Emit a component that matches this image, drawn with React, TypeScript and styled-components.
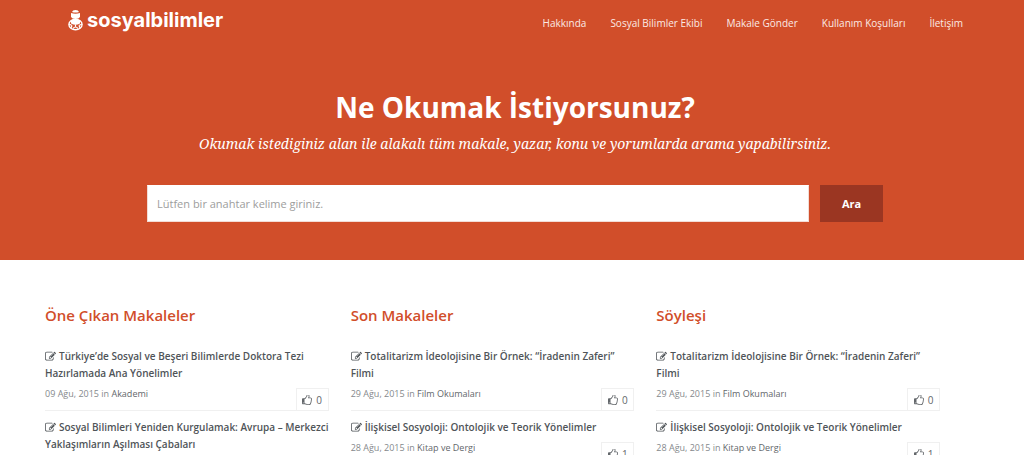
import React from "react";
import styled, { createGlobalStyle } from "styled-components";

const GlobalStyle = createGlobalStyle`
  *, *::before, *::after { box-sizing: border-box; }
  body {
    margin: 0;
    background: #fff;
    color: #4f5458;
    font-family: "Open Sans", "Noto Sans", sans-serif;
    overflow-x: hidden;
  }
  h1, h2, h3, p, ul { margin: 0; padding: 0; }
  ul { list-style: none; }
  a { color: inherit; text-decoration: none; }
`;

const Hero = styled.header`
  background: #d14e2a;
  color: #fff;
  padding-bottom: 38px;
`;

const TopBar = styled.div`
  display: flex;
  align-items: center;
  justify-content: space-between;
  height: 46px;
  padding: 0 61px 0 68px;
`;

const Logo = styled.a`
  display: flex;
  align-items: center;
  gap: 4px;
  padding-bottom: 6px;
  font-family: Inter, "Open Sans", sans-serif;
  font-size: 20px;
  line-height: 24px;
  font-weight: 700;
`;

const LogoMark = styled.svg`
  width: 15px;
  height: 22px;
`;

const Nav = styled.nav`
  display: flex;
  gap: 24px;
  font-size: 10px;
  line-height: 20px;
  color: #fbeae5;
`;

const HeroBody = styled.div`
  padding: 40px 141px 0 147px;
  text-align: center;
`;

const HeroTitle = styled.h1`
  font-size: 28px;
  line-height: 42px;
  font-weight: 700;
`;

const Tagline = styled.p`
  margin-top: 4px;
  font-family: "Noto Serif", "Liberation Serif", serif;
  font-size: 14px;
  line-height: 24px;
  font-style: italic;
`;

const SearchForm = styled.form`
  display: flex;
  gap: 11px;
  margin-top: 29px;
`;

const SearchInput = styled.input`
  flex: 1;
  min-width: 0;
  height: 37px;
  padding: 0 9px;
  border: 1px solid #f3dcd5;
  border-top-color: #fff;
  border-radius: 0;
  background: #fff;
  color: #555;
  font-family: inherit;
  font-size: 11px;
  &::placeholder { color: #9d9d9d; opacity: 1; }
`;

const SearchButton = styled.button`
  width: 63px;
  height: 37px;
  padding: 0;
  border: 0;
  background: #9b3622;
  color: #fff;
  font-family: inherit;
  font-size: 11px;
  font-weight: 700;
`;

const Columns = styled.main`
  display: grid;
  grid-template-columns: repeat(3, minmax(0, 1fr));
  gap: 22px;
  padding: 42px 84px 0 45px;
`;

const ColumnTitle = styled.h2`
  color: #d14e2a;
  font-size: 15px;
  line-height: 26px;
  font-weight: 600;
  margin-bottom: 19px;
`;

const Article = styled.li`
  display: flow-root;
  border-bottom: 1px solid #f0f0f0;
  margin-bottom: 7px;
  &:last-child { border-bottom: 0; }
`;

const ArticleTitle = styled.h3`
  font-size: 10px;
  line-height: 17px;
  padding-top: 1px;
  font-weight: 600;
`;

const MetaRow = styled.div`
  display: flex;
  justify-content: space-between;
  align-items: flex-start;
  padding-top: 4px;
`;

const Meta = styled.p`
  font-size: 9px;
  line-height: 16px;
  color: #85898c;
  a { color: #63676b; }
`;

const LikeButton = styled.button`
  display: flex;
  align-items: center;
  justify-content: center;
  gap: 4px;
  width: 33px;
  height: 23px;
  margin: 2px 0 -1px;
  padding: 0;
  border: 1px solid #f0f0f0;
  background: #fff;
  color: #63676b;
  font-family: inherit;
  font-size: 10px;
`;

const Glyph = styled.svg<{ $size: number; $inline?: boolean }>`
  width: ${(p) => p.$size}px;
  height: ${(p) => p.$size}px;
  fill: currentColor;
  ${(p) => p.$inline && "margin-right: 3px; vertical-align: -2px;"}
`;

const EditIcon = () => (
  <Glyph $size={11} $inline viewBox="0 128 1792 1536" aria-hidden="true">
    <path d="M888 1184l116-116-152-152-116 116v56h96v96h56zm440-720q-16-16-33 1l-350 350q-17 17-1 33t33-1l350-350q17-17 1-33zm80 594v190q0 119-84.5 203.5t-203.5 84.5h-832q-119 0-203.5-84.5t-84.5-203.5v-832q0-119 84.5-203.5t203.5-84.5h832q63 0 117 25 15 7 18 23 3 17-9 29l-49 49q-14 14-32 8-23-6-45-6h-832q-66 0-113 47t-47 113v832q0 66 47 113t113 47h832q66 0 113-47t47-113v-126q0-13 9-22l64-64q15-15 35-7t20 29zm-96-738l288 288-672 672h-288v-288zm444 132l-92 92-288-288 92-92q28-28 68-28t68 28l152 152q28 28 28 68t-28 68z" />
  </Glyph>
);

const ThumbIcon = () => (
  <Glyph $size={10} viewBox="0 128 1536 1536" aria-hidden="true">
    <path d="M256 1344q0-26-19-45t-45-19-45 19-19 45 19 45 45 19 45-19 19-45zm1152-576q0-51-39-89.5t-89-38.5h-352q0-58 48-159.5t48-160.5q0-98-32-145t-128-47q-26 26-38 85t-30.5 125.5-59.5 109.5q-22 23-77 91-4 5-23 30t-31.5 41-34.5 42.5-40 44-38.5 35.5-40 27-35.5 9h-32v640h32q13 0 31.5 3t33 6.5 38 11 35 11.5 35.5 12.5 29 10.5q211 73 342 73h121q192 0 192-167 0-26-5-56 30-16 47.5-52.5t17.5-73.5-18-69q53-50 53-119 0-25-10-55.5t-25-47.5q32-1 53.5-47t21.5-81zm128-1q0 89-49 163 9 33 9 69 0 77-38 144 3 21 3 43 0 101-60 178 1 139-85 219.5t-227 80.5h-129q-96 0-189.5-22.5t-216.5-65.5q-116-40-138-40h-288q-53 0-90.5-37.5t-37.5-90.5v-640q0-53 37.5-90.5t90.5-37.5h274q36-24 137-155 58-75 107-128 24-25 35.5-85.5t30.5-126.5 62-108q39-37 90-37 84 0 151 32.5t102 101.5 35 186q0 93-48 192h176q104 0 180 76t76 179z" />
  </Glyph>
);

type Entry = { title: string; date?: string; category?: string; likes?: number };

const film: Entry = {
  title: "Totalitarizm İdeolojisine Bir Örnek: “İradenin Zaferi” Filmi",
  date: "29 Ağu, 2015",
  category: "Film Okumaları",
  likes: 0,
};
const relational: Entry = {
  title: "İlişkisel Sosyoloji: Ontolojik ve Teorik Yönelimler",
  date: "28 Ağu, 2015",
  category: "Kitap ve Dergi",
  likes: 1,
};

const sections: { heading: string; entries: Entry[] }[] = [
  {
    heading: "Öne Çıkan Makaleler",
    entries: [
      {
        title: "Türkiye’de Sosyal ve Beşeri Bilimlerde Doktora Tezi Hazırlamada Ana Yönelimler",
        date: "09 Ağu, 2015",
        category: "Akademi",
        likes: 0,
      },
      {
        title: "Sosyal Bilimleri Yeniden Kurgulamak: Avrupa – Merkezci Yaklaşımların Aşılması Çabaları",
      },
    ],
  },
  { heading: "Son Makaleler", entries: [film, relational] },
  { heading: "Söyleşi", entries: [film, relational] },
];

const links = ["Hakkında", "Sosyal Bilimler Ekibi", "Makale Gönder", "Kullanım Koşulları", "İletişim"];

export default function App() {
  return (
    <>
      <GlobalStyle />
      <Hero>
        <TopBar>
          <Logo href="#">
            <LogoMark viewBox="0 0 15 22" aria-hidden="true">
              <path d="M4 3Q4.500 1 7.500 1T11 3Q7.500 4 4 3z" fill="#fff" />
              <path d="M3 4q4.500 1.500 9 0v4q-1 2-4.500 2T3 8z" fill="#fff" />
              <ellipse cx="7.500" cy="15.500" rx="6.600" ry="5.300" fill="none" stroke="#fff" strokeWidth="1.400" />
              <path d="M3 11.500q4.500-2 9 0v3q-4.500 2.500-9 0z" fill="#fff" />
              <path d="M1 15l3 1.500M14 15l-3 1.500M4 16.500l-1 2.500M11 16.500l1 2.500M7.500 15.500v2M5 19.500q2.500-3 5 0" fill="none" stroke="#fff" strokeWidth="1.200" />
            </LogoMark>
            sosyalbilimler
          </Logo>
          <Nav>
            {links.map((l) => (
              <a href="#" key={l}>{l}</a>
            ))}
          </Nav>
        </TopBar>
        <HeroBody>
          <HeroTitle>Ne Okumak İstiyorsunuz?</HeroTitle>
          <Tagline>
            Okumak istediginiz alan ile alakalı tüm makale, yazar, konu ve yorumlarda arama yapabilirsiniz.
          </Tagline>
          <SearchForm onSubmit={(e) => e.preventDefault()}>
            <SearchInput type="text" aria-label="Anahtar kelime" placeholder="Lütfen bir anahtar kelime giriniz." />
            <SearchButton type="submit">Ara</SearchButton>
          </SearchForm>
        </HeroBody>
      </Hero>
      <Columns>
        {sections.map((s) => (
          <section key={s.heading}>
            <ColumnTitle>{s.heading}</ColumnTitle>
            <ul>
              {s.entries.map((e) => (
                <Article key={e.title}>
                  <ArticleTitle>
                    <a href="#"><EditIcon />{e.title}</a>
                  </ArticleTitle>
                  {e.date && (
                    <MetaRow>
                      <Meta>{e.date} in <a href="#">{e.category}</a></Meta>
                      <LikeButton type="button"><ThumbIcon />{e.likes}</LikeButton>
                    </MetaRow>
                  )}
                </Article>
              ))}
            </ul>
          </section>
        ))}
      </Columns>
    </>
  );
}
